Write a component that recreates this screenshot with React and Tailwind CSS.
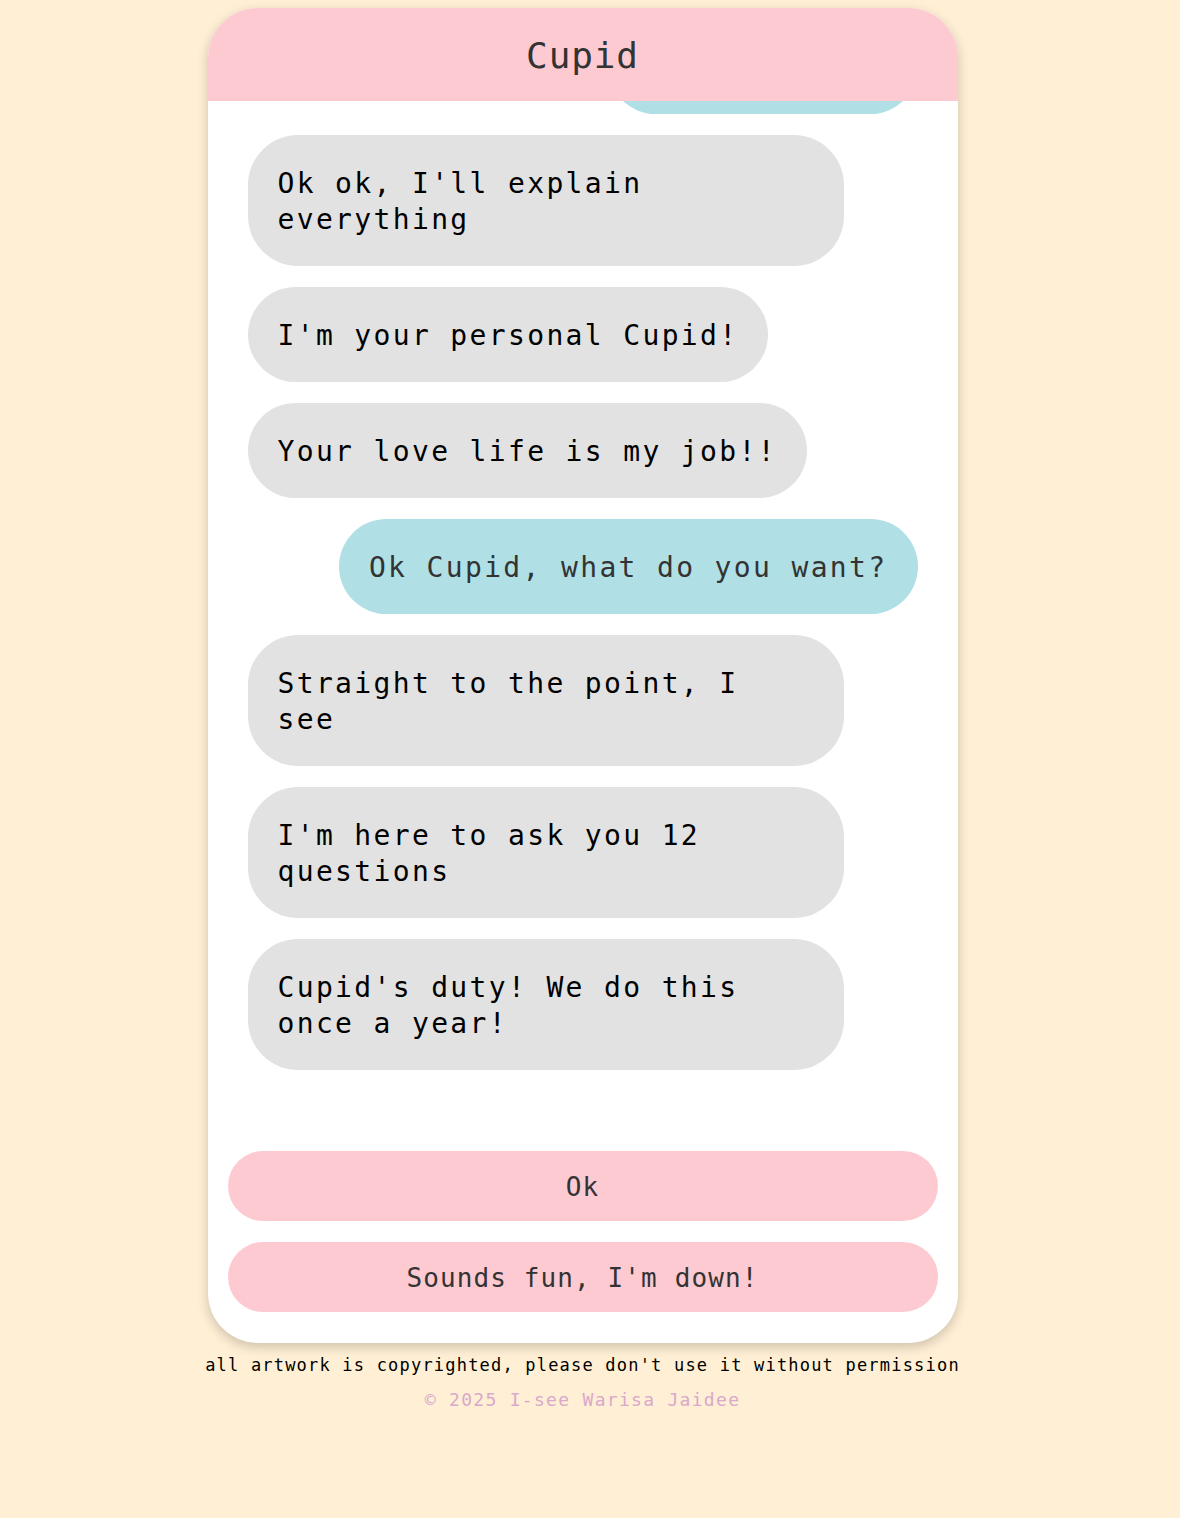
const messages = [
  { from: 'me', text: 'Who are you??' },
  { from: 'cupid', text: "Ok ok, I'll explain everything" },
  { from: 'cupid', text: "I'm your personal Cupid!" },
  { from: 'cupid', text: 'Your love life is my job!!' },
  { from: 'me', text: 'Ok Cupid, what do you want?' },
  { from: 'cupid', text: 'Straight to the point, I see' },
  { from: 'cupid', text: "I'm here to ask you 12 questions" },
  { from: 'cupid', text: "Cupid's duty! We do this once a year!" },
];

const replies = ['Ok', "Sounds fun, I'm down!"];

const Bubble = ({ msg }) => {
  const mine = msg.from === 'me';
  return (
    <div
      className={`max-w-[596px] rounded-[50px] px-[30px] pt-[31px] pb-[28px] text-[28px] leading-[36px] tracking-[2.35px] ${
        mine
          ? 'self-end bg-[#b0e0e6] text-[#333]'
          : 'self-start bg-[#e2e2e2] text-black'
      }`}
    >
      {msg.text}
    </div>
  );
};

export default function App() {
  return (
    <div className="min-h-screen bg-[#ffefd5] font-['DejaVu_Sans_Mono',monospace]">
      <div className="w-[1165px] flex flex-col items-center pt-[8px]">
        <div className="w-[750px] bg-white rounded-[50px] overflow-hidden shadow-[0_4px_12px_rgba(0,0,0,0.2)]">
          <div className="h-[93px] bg-[#fdcad2] flex items-center justify-center">
            <h1 className="text-[36px] leading-[44px] tracking-[0.9px] text-[#333] pt-[2px]">
              Cupid
            </h1>
          </div>

          <div className="h-[1030px] overflow-hidden flex flex-col justify-end gap-[21px] px-[40px] pb-[61px]">
            {messages.map((msg, i) => (
              <Bubble key={i} msg={msg} />
            ))}
          </div>

          <div className="flex flex-col gap-[21px] px-[20px] pt-[20px] pb-[31px]">
            {replies.map((r) => (
              <button
                key={r}
                className="h-[70px] rounded-[35px] bg-[#fdcad2] text-[26px] tracking-[1.1px] text-[#333] pt-[2px]"
              >
                {r}
              </button>
            ))}
          </div>
        </div>

        <p className="mt-[11px] text-[17px] leading-[22px] tracking-[1.2px] text-black">
          all artwork is copyrighted, please don't use it without permission
        </p>
        <p className="mt-[13px] text-[18px] leading-[22px] tracking-[1.3px] text-[#daa8cb]">
          © 2025 I-see Warisa Jaidee
        </p>
      </div>
    </div>
  );
}
